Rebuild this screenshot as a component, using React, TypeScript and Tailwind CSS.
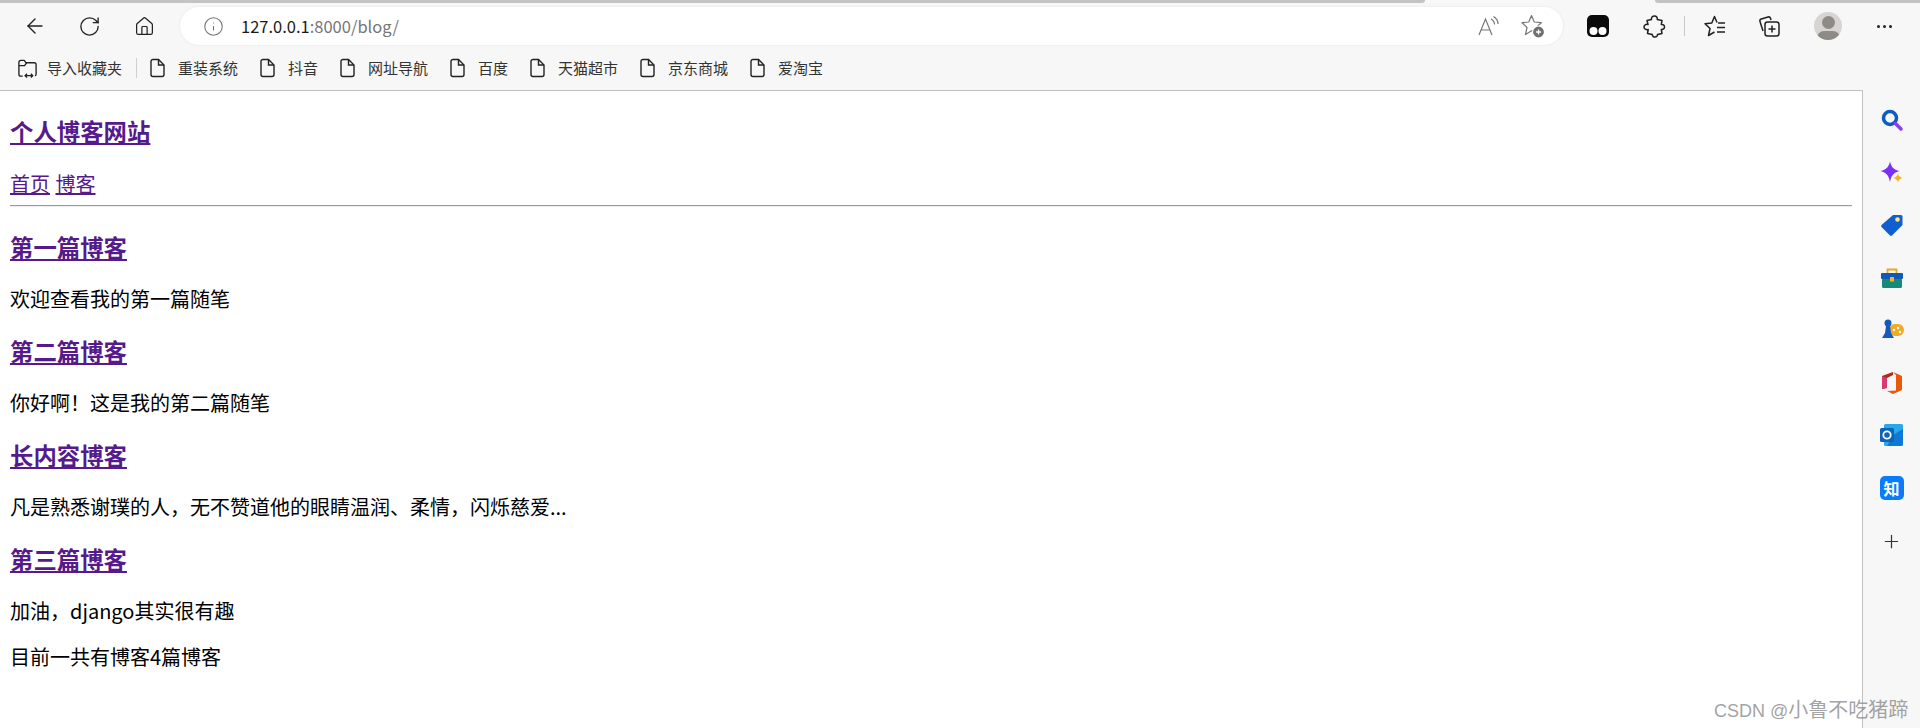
import { ArrowLeft, RotateCw, Home, Info, Plus } from 'lucide-react'

const bookmarks = ['重装系统', '抖音', '网址导航', '百度', '天猫超市', '京东商城', '爱淘宝']

const posts = [
  { title: '第一篇博客', excerpt: '欢迎查看我的第一篇随笔' },
  { title: '第二篇博客', excerpt: '你好啊！这是我的第二篇随笔' },
  { title: '长内容博客', excerpt: '凡是熟悉谢璞的人，无不赞道他的眼睛温润、柔情，闪烁慈爱...' },
  { title: '第三篇博客', excerpt: '加油，django其实很有趣' },
]

const PageIcon = () => (
  <svg viewBox="0 0 17 20" className="w-[17px] h-[20px] shrink-0" fill="none" stroke="#222" strokeWidth="1.4">
    <path d="M2 3.500a2 2 0 0 1 2-2h5.500L15 7v9.500a2 2 0 0 1-2 2H4a2 2 0 0 1-2-2z" />
    <path d="M9.500 1.500V7H15" />
  </svg>
)

const ImportIcon = () => (
  <svg viewBox="0 0 22 22" className="w-[21px] h-[21px] shrink-0" fill="none" stroke="#222" strokeWidth="1.4">
    <path d="M6 19H4a2 2 0 0 1-2-2V4.500a2 2 0 0 1 2-2h3.500l2 2.500H18a2 2 0 0 1 2 2V17a2 2 0 0 1-1 1.700" />
    <path d="M2 8h6l2-3" />
    <path d="M8.500 18.500h8M10.500 16.500l-2 2 2 2M14.500 16.500l2 2-2 2" />
  </svg>
)

const ToolbarIcons = () => (
  <div className="flex items-center ml-[23px]">
    {/* tampermonkey */}
    <svg viewBox="0 0 24 24" className="w-[24px] h-[24px]">
      <rect x="1" y="1" width="22" height="22" rx="5" fill="#0b0b0b" />
      <circle cx="7.500" cy="17" r="4" fill="#fff" />
      <circle cx="16.500" cy="17" r="4" fill="#fff" />
    </svg>
    {/* extensions */}
    <svg viewBox="0 0 24 24" className="w-[24px] h-[24px] ml-[32px]" fill="none" stroke="#222" strokeWidth="1.500" strokeLinejoin="round">
      <path d="M9.500 5.500C9 3.500 10.500 2 12.500 2s3 1.500 2.800 3.500L20 6.500l-.700 4c2.200-.300 3.200 1 3.200 2.500s-1.500 2.800-3.200 2.500l.700 4-4.500 1c.200 1.500-1 2.500-2.500 2.500s-2.800-1-2.700-2.500l-4.800-1 .700-4C4 16 2 15 2 13s1.800-3 4-2.500L5 6.500z" />
    </svg>
    <div className="w-[1px] h-[20px] bg-[#c8c8c8] ml-[18px]" />
    {/* favorites */}
    <svg viewBox="0 0 24 24" className="w-[24px] h-[24px] ml-[18px]" fill="none" stroke="#222" strokeWidth="1.500" strokeLinejoin="round">
      <path d="M11.500 18L5.500 21.500 7 14.500 2 9.800l6.800-.800L11.500 2.500 14 8.500" />
      <path d="M15 9h7M14 13.500h8M14 18h8" />
    </svg>
    {/* collections */}
    <svg viewBox="0 0 24 24" className="w-[24px] h-[24px] ml-[30px]" fill="none" stroke="#222" strokeWidth="1.500" strokeLinejoin="round">
      <path d="M6 17L3 7.500a2 2 0 0 1 1.300-2.500L11 3a2 2 0 0 1 2.500 1.300L14 6" />
      <rect x="8" y="8" width="14" height="14" rx="2.500" />
      <path d="M15 11.500v7M11.500 15h7" />
    </svg>
    {/* profile */}
    <div className="w-[28px] h-[28px] ml-[33px] rounded-full bg-[#d6d5d3] overflow-hidden flex flex-col items-center">
      <div className="w-[13px] h-[13px] rounded-full bg-[#8e8b87] mt-[4px] shrink-0" />
      <div className="w-[23px] h-[14px] rounded-full bg-[#8e8b87] mt-[2px] shrink-0" />
    </div>
    <div className="flex gap-[3px] ml-[35px]">
      <span className="w-[3px] h-[3px] rounded-full bg-[#222]" />
      <span className="w-[3px] h-[3px] rounded-full bg-[#222]" />
      <span className="w-[3px] h-[3px] rounded-full bg-[#222]" />
    </div>
  </div>
)

const SidebarIcons = () => (
  <div className="w-[57px] shrink-0 bg-[#f7f7f7] flex flex-col items-center gap-[28.500px] pt-[18px]">
    {/* search */}
    <svg viewBox="0 0 24 24" className="w-[24px] h-[24px]" fill="none">
      <circle cx="10" cy="10" r="6.500" stroke="#0f5bc4" strokeWidth="3.500" />
      <path d="M15.500 15.500l5.500 5.500" stroke="#8a3ff0" strokeWidth="3.500" strokeLinecap="round" />
    </svg>
    {/* sparkle */}
    <svg viewBox="0 0 24 24" className="w-[24px] h-[24px]">
      <path d="M10 .500c1.200 5.500 3.500 8 9.500 9.500-6 1.500-8.300 4.500-9.500 11-1.200-6.500-3.500-9.500-9.500-11C6.500 8.500 8.800 6 10 .500z" fill="#7b2ff7" />
      <path d="M18 12.500c.600 2.500 1.700 3.600 4.500 4.500-2.800.900-3.900 2-4.500 4.500-.600-2.500-1.700-3.600-4.500-4.500 2.800-.900 3.900-2 4.500-4.500z" fill="#f5b324" />
    </svg>
    {/* tag */}
    <svg viewBox="0 0 24 24" className="w-[24px] h-[24px]">
      <path d="M13 2h8a1.500 1.500 0 0 1 1.500 1.500V12L12 22.500a1.500 1.500 0 0 1-2 0L1.500 14a1.500 1.500 0 0 1 0-2z" fill="#0f5fd0" />
      <circle cx="17.500" cy="6.500" r="2.300" fill="#ffe680" />
    </svg>
    {/* toolbox */}
    <svg viewBox="0 0 24 24" className="w-[24px] h-[24px]">
      <path d="M7.500 7V3.500h9V7" fill="none" stroke="#eaa821" strokeWidth="1.800" />
      <rect x="2" y="12" width="20" height="10" rx="1.500" fill="#168a78" />
      <rect x="1" y="7" width="22" height="6" rx="1" fill="#1059b8" />
      <rect x="10" y="11" width="4" height="4.500" fill="#f5b324" />
    </svg>
    {/* games */}
    <svg viewBox="0 0 24 24" className="w-[24px] h-[24px]">
      <rect x="9" y="6" width="15" height="12" rx="6" fill="#f0ab25" />
      <circle cx="14" cy="12" r="1.200" fill="#fff" />
      <circle cx="18" cy="10" r="1.200" fill="#fff" />
      <circle cx="20" cy="14" r="1.200" fill="#fff" />
      <circle cx="8" cy="5" r="3.500" fill="#1559c0" />
      <path d="M6 8h4l1 7 3 5H2l3-5z" fill="#1559c0" />
    </svg>
    {/* office */}
    <svg viewBox="0 0 24 24" className="w-[24px] h-[24px]">
      <path d="M2 5l11-4v3L7 7v10l-5 1z" fill="#b5251a" />
      <path d="M2 18V5l5 2v10z" fill="#d63a6e" />
      <path d="M13 1l8 3.500a1.500 1.500 0 0 1 1 1.500v12a1.500 1.500 0 0 1-1 1.500L13 23l-6-3 9-.500V4z" fill="#e8590c" />
    </svg>
    {/* outlook */}
    <svg viewBox="0 0 24 24" className="w-[24px] h-[24px]">
      <rect x="4" y="1" width="19" height="22" rx="1.500" fill="#28a8ea" />
      <path d="M13 12l10-6v15a2 2 0 0 1-2 2H7z" fill="#0f78d4" />
      <rect x="0" y="5" width="14" height="14" rx="1.500" fill="#0a64b8" />
      <circle cx="7" cy="12" r="3.700" fill="none" stroke="#fff" strokeWidth="1.800" />
    </svg>
    {/* zhihu */}
    <div className="w-[24px] h-[24px] rounded-[5px] bg-[#0a7bfa] flex items-center justify-center text-white text-[16px] leading-none font-bold [font-family:'Noto_Sans_CJK_SC',sans-serif]">
      知
    </div>
    <Plus className="w-[21px] h-[21px] text-[#333] mt-[3px]" strokeWidth={1.4} />
  </div>
)

export default function App() {
  return (
    <div className="relative h-[728px] w-[1920px] overflow-hidden flex flex-col bg-white [font-family:'Noto_Sans_CJK_SC',sans-serif]">
      {/* Browser chrome */}
      <div className="h-[90px] shrink-0 bg-[#f7f7f7] flex flex-col">
        <div className="h-[3px] flex shrink-0">
          <div className="w-[1425px] bg-[#c3c3c3] rounded-br-[4px]" />
          <div className="w-[230px]" />
          <div className="flex-1 bg-[#c3c3c3] rounded-bl-[4px]" />
        </div>

        <div className="flex items-center h-[46px] pl-[23px]">
          <ArrowLeft className="w-[24px] h-[24px] text-[#222]" strokeWidth={1.4} />
          <RotateCw className="w-[23px] h-[23px] text-[#222] ml-[31px]" strokeWidth={1.4} />
          <Home className="w-[21px] h-[21px] text-[#222] ml-[33px]" strokeWidth={1.4} />
          <div className="w-[1383px] h-[38px] ml-[25px] bg-white rounded-full flex items-center pl-[23px] pr-[18px] shadow-[0_0_3px_rgba(0,0,0,0.08)]">
            <Info className="w-[21px] h-[21px] text-[#6e6e6e]" strokeWidth={1.2} />
            <div className="ml-[17px] text-[16.500px] text-[#1a1a1a] flex-1">
              127.0.0.1<span className="text-[#767676]">:8000/blog/</span>
            </div>
            <svg viewBox="0 0 24 24" className="w-[24px] h-[24px]" fill="none" stroke="#777" strokeWidth="1.200">
              <path d="M3 21L9.500 5 16 21M5.500 16h8" />
              <path d="M15 5c2 1 3.500 3 3.500 5.500M17.500 2.500c2.500 1.500 4.500 4 4.500 7.500" />
            </svg>
            <svg viewBox="0 0 24 24" className="w-[24px] h-[24px] ml-[21px]" fill="none">
              <path d="M10.500 1.500l2.800 6.500 7 .700-5.200 4.800 1.500 7-6.100-3.700-6 3.700 1.500-7L1 8.700l6.800-.700z" stroke="#777" strokeWidth="1.200" strokeLinejoin="round" />
              <circle cx="17.500" cy="18" r="6" fill="#6f6f6f" stroke="#fff" strokeWidth="1.200" />
              <path d="M17.500 15.500v5M15 18h5" stroke="#fff" strokeWidth="1.300" />
            </svg>
          </div>
          <ToolbarIcons />
        </div>

        <div className="flex items-center h-[38px] pl-[17px] text-[15px] text-[#333]">
          <ImportIcon />
          <span className="ml-[9px]">导入收藏夹</span>
          <div className="w-[1px] h-[20px] bg-[#d0d0d0] ml-[14px] mr-[12px]" />
          <div className="flex items-center gap-[21px]">
            {bookmarks.map((b) => (
              <div key={b} className="flex items-center gap-[12px]">
                <PageIcon />
                <span>{b}</span>
              </div>
            ))}
          </div>
        </div>
      </div>

      <div className="flex-1 flex min-h-0">
        {/* Page content */}
        <div className="flex-1 border-t border-r border-[#c0c0c0] bg-white pl-[10px] pr-[10px] text-[20px] text-black leading-[29px]">
          <h3 className="text-[23.400px] font-bold mt-[23px] mb-[21px] leading-[34px]">
            <a className="text-[#551a8b] underline">个人博客网站</a>
          </h3>
          <div className="leading-[29px]">
            <a className="text-[#551a8b] underline">首页</a>{' '}
            <a className="text-[#551a8b] underline ml-[1px]">博客</a>
          </div>
          <div className="mt-[7px] mb-[23px] border-t border-b border-t-[#9a9a9a] border-b-[#eeeeee] h-[2px]" />
          {posts.map((p) => (
            <div key={p.title}>
              <h3 className="text-[23.400px] font-bold mt-[21px] mb-[20px] leading-[34px]">
                <a className="text-[#551a8b] underline">{p.title}</a>
              </h3>
              <p className="mt-[20px] mb-[17px] leading-[29px]">{p.excerpt}</p>
            </div>
          ))}
          <p>目前一共有博客4篇博客</p>
        </div>
        <SidebarIcons />
      </div>

      <div className="absolute left-[1714px] top-[697px] text-[20px] leading-[26px] text-[#8a8a8a]/80 [font-family:'Liberation_Sans','Noto_Sans_CJK_SC',sans-serif]">
        <span className="text-[18px]">CSDN @</span>小鲁不吃猪蹄
      </div>
    </div>
  )
}
